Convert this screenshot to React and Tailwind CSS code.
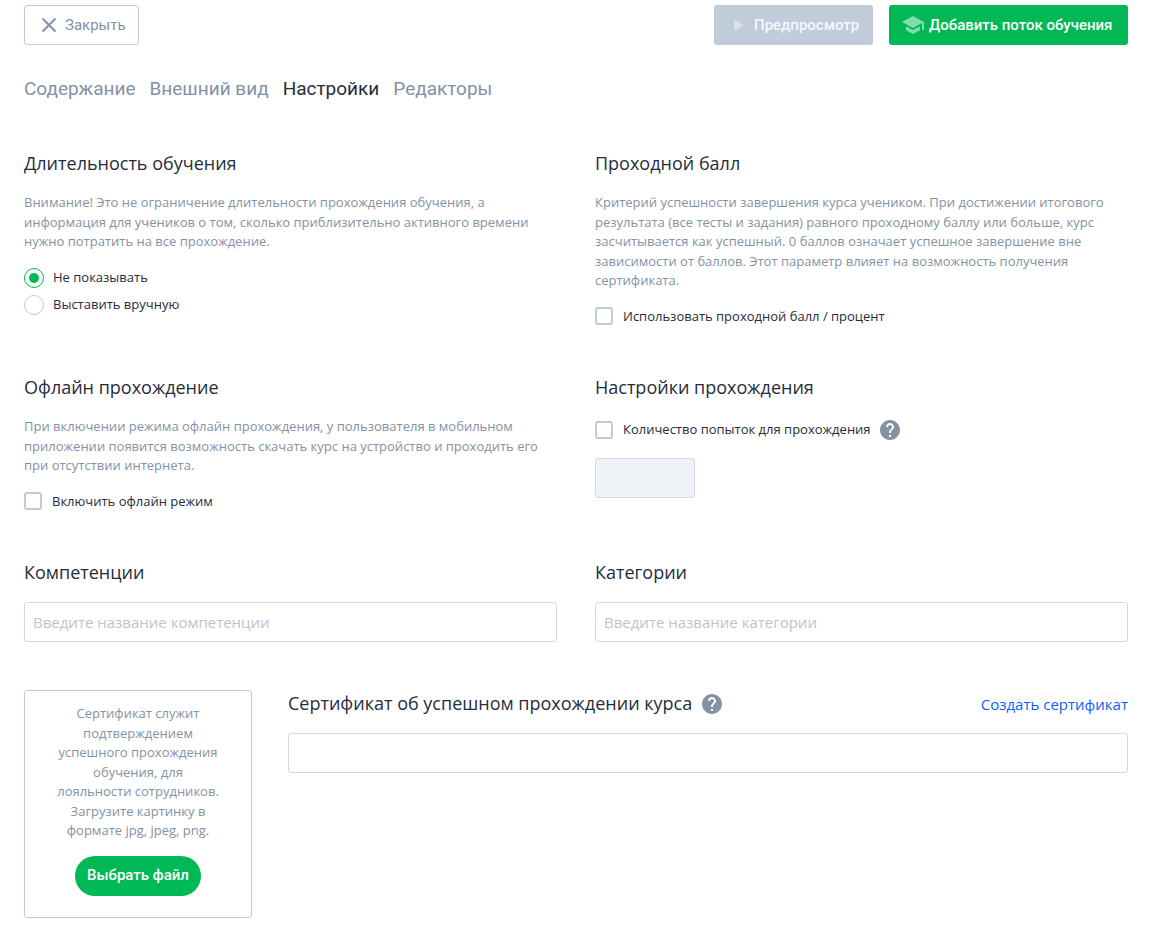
import React from 'react';

const checkboxClass =
  'size-[18px] shrink-0 cursor-pointer appearance-none rounded-[3px] border-2 border-[#c0cbd9] bg-white checked:border-[#00b956] checked:bg-[#00b956]';
const radioClass =
  'grid size-5 shrink-0 cursor-pointer appearance-none place-items-center rounded-full border border-[#c0c8d8] bg-white checked:border-[#00b956] checked:before:size-[10px] checked:before:rounded-full checked:before:bg-[#00b956]';
const inputClass =
  'h-10 w-full rounded-[3px] border border-[#d0d9e4] bg-white px-2 text-[15px] outline-none placeholder:text-[#bcc4d1] focus:border-[#8492a6]';
const headerButtonClass =
  'flex h-10 items-center gap-1 rounded-[3px] px-3 font-[Roboto,sans-serif] text-[15px]';

function CloseIcon() {
  return (
    <svg className="size-6" viewBox="0 0 24 24" fill="none" stroke="currentColor" strokeWidth="1.9" aria-hidden="true">
      <path d="M5.5 5.5l13 13M18.500 5.500l-13 13" />
    </svg>
  );
}

function PlayIcon() {
  return (
    <svg className="size-6 opacity-50" viewBox="0 0 24 24" fill="currentColor" aria-hidden="true">
      <path d="M8 6v12l10-6z" />
    </svg>
  );
}

function SchoolIcon() {
  return (
    <svg className="size-6 opacity-50" viewBox="0 0 24 24" fill="currentColor" aria-hidden="true">
      <path d="M5 13.180v4L12 21l7-3.820v-4L12 17l-7-3.820zM12 3L1 9l11 6 9-4.910V17h2V9L12 3z" />
    </svg>
  );
}

function HelpButton({ label }) {
  return (
    <button type="button" aria-label={label} className="size-5 shrink-0 text-[#8492a6]">
      <svg className="size-5" viewBox="2 2 20 20" fill="currentColor" aria-hidden="true">
        <path d="M12 2C6.480 2 2 6.480 2 12s4.480 10 10 10 10-4.480 10-10S17.520 2 12 2zm1 17h-2v-2h2v2zm2.070-7.750l-.9.920C13.450 12.900 13 13.500 13 15h-2v-.5c0-1.100.450-2.100 1.170-2.830l1.240-1.260c.370-.360.590-.860.590-1.410 0-1.100-.9-2-2-2s-2 .9-2 2H8c0-2.210 1.790-4 4-4s4 1.790 4 4c0 .880-.360 1.680-.930 2.250z" />
      </svg>
    </button>
  );
}

function Section({ title, description, children }) {
  return (
    <section className="flex min-w-0 flex-col gap-4">
      <h2 className="text-lg leading-[27px]">{title}</h2>
      {description && <p className="text-[13px] leading-normal text-[#8492a6]">{description}</p>}
      {children}
    </section>
  );
}

function Checkbox({ children }) {
  return (
    <label className="flex w-fit cursor-pointer items-center gap-[10px] text-[13px] leading-normal">
      <input type="checkbox" className={checkboxClass} />
      {children}
    </label>
  );
}

function Radio({ children, ...props }) {
  return (
    <label className="flex w-fit cursor-pointer items-center gap-[9px] text-[13px] leading-normal">
      <input type="radio" name="duration" className={radioClass} {...props} />
      {children}
    </label>
  );
}

const tabs = ['Содержание', 'Внешний вид', 'Настройки', 'Редакторы'];

export default function App() {
  return (
    <div className="min-h-screen bg-white pt-[5px] pr-[37px] pb-2 pl-6 font-['Open_Sans',sans-serif] text-[#1f2d3d]">
      <header className="flex items-center gap-4">
        <button type="button" className={`${headerButtonClass} border border-[#c0cbd9] text-[#8492a6]`}>
          <CloseIcon />
          Закрыть
        </button>
        <button type="button" disabled className={`${headerButtonClass} ml-auto min-w-[159px] bg-[#c0ccda] font-medium text-[#f5f7fa]`}>
          <PlayIcon />
          Предпросмотр
        </button>
        <button type="button" className={`${headerButtonClass} min-w-[239px] bg-[#00b956] font-medium text-white`}>
          <SchoolIcon />
          Добавить поток обучения
        </button>
      </header>

      <nav className="mt-8 flex gap-3.5 font-[Roboto,sans-serif] text-[19px] leading-6">
        {tabs.map((tab) => (
          <a
            key={tab}
            href="#"
            aria-current={tab === 'Настройки' ? 'page' : undefined}
            className={tab === 'Настройки' ? 'text-[#1f2d3d]' : 'text-[#8492a6]'}
          >
            {tab}
          </a>
        ))}
      </nav>

      <main className="mt-[49px]">
        <div className="grid grid-cols-2 gap-x-[38px] gap-y-12">
          <Section
            title="Длительность обучения"
            description="Внимание! Это не ограничение длительности прохождения обучения, а информация для учеников о том, сколько приблизительно активного времени нужно потратить на все прохождение."
          >
            <div className="flex flex-col gap-[7px]">
              <Radio defaultChecked>Не показывать</Radio>
              <Radio>Выставить вручную</Radio>
            </div>
          </Section>

          <Section
            title="Проходной балл"
            description="Критерий успешности завершения курса учеником. При достижении итогового результата (все тесты и задания) равного проходному баллу или больше, курс засчитывается как успешный. 0 баллов означает успешное завершение вне зависимости от баллов. Этот параметр влияет на возможность получения сертификата."
          >
            <Checkbox>Использовать проходной балл / процент</Checkbox>
          </Section>

          <Section
            title="Офлайн прохождение"
            description="При включении режима офлайн прохождения, у пользователя в мобильном приложении появится возможность скачать курс на устройство и проходить его при отсутствии интернета."
          >
            <Checkbox>Включить офлайн режим</Checkbox>
          </Section>

          <Section title="Настройки прохождения">
            <div className="flex flex-col gap-[18px] pt-[3px]">
              <div className="flex items-center gap-[9px]">
                <Checkbox>Количество попыток для прохождения</Checkbox>
                <HelpButton label="Справка о попытках" />
              </div>
              <input
                type="text"
                disabled
                aria-label="Количество попыток"
                className="h-10 w-25 rounded-[3px] border border-[#d0d9e4] bg-[#eff2f7] px-2"
              />
            </div>
          </Section>

          <Section title="Компетенции">
            <input type="text" aria-label="Компетенции" placeholder="Введите название компетенции" className={inputClass} />
          </Section>

          <Section title="Категории">
            <input type="text" aria-label="Категории" placeholder="Введите название категории" className={inputClass} />
          </Section>
        </div>

        <div className="mt-12 flex items-start gap-9">
          <div className="flex min-h-[228px] w-[228px] shrink-0 flex-col items-center gap-[15px] rounded-[3px] border border-[#c0cbd9] px-[30px] pt-[13px] pb-5">
            <p className="text-center text-[13px] leading-normal text-[#8492a6]">
              Сертификат служит подтверждением успешного прохождения обучения, для лояльности сотрудников. Загрузите картинку в формате jpg, jpeg, png.
            </p>
            <button type="button" className="h-10 rounded-full bg-[#00b956] px-3 font-[Roboto,sans-serif] text-[15px] font-medium text-white">
              Выбрать файл
            </button>
          </div>

          <section className="flex min-w-0 flex-1 flex-col gap-4">
            <div className="flex items-center gap-[10px]">
              <h2 className="text-lg leading-[27px]">
                <label htmlFor="certificate">Сертификат об успешном прохождении курса</label>
              </h2>
              <HelpButton label="Справка о сертификате" />
              <a href="#" className="ml-auto text-[15px] leading-6 text-[#1060ff]">
                Создать сертификат
              </a>
            </div>
            <input id="certificate" type="text" className={inputClass} />
          </section>
        </div>
      </main>
    </div>
  );
}
